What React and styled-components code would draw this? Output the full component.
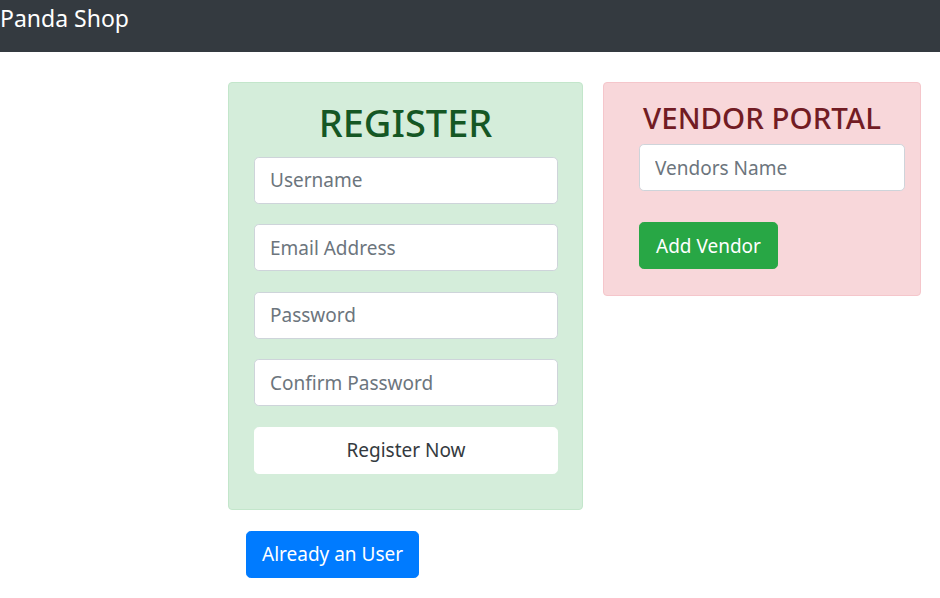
import styled, { createGlobalStyle } from "styled-components"

const Global = createGlobalStyle`
  * { box-sizing: border-box; }
  body {
    margin: 0;
    font-family: "Noto Sans", "Open Sans", sans-serif;
    background: #fff;
    color: #212529;
  }
`

const Navbar = styled.nav`
  height: 52px;
  background-color: #343a40;
  display: flex;
  align-items: flex-start;
`

const Brand = styled.span`
  color: #fff;
  font-size: 23px;
  line-height: 36px;
`

const Main = styled.div`
  display: flex;
  align-items: flex-start;
  gap: 20px;
  padding: 30px 0 0 228px;
`

const Column = styled.div`
  display: flex;
  flex-direction: column;
  align-items: flex-start;
`

const Card = styled.div`
  background-color: ${p => p.bg};
  border: 1px solid ${p => p.border};
  border-radius: 4px;
  width: ${p => p.width}px;
  padding: ${p => p.pad};
  display: flex;
  flex-direction: column;
`

const Heading = styled.h1`
  margin: 0 0 ${p => p.mb}px ${p => p.shift || 0}px;
  color: ${p => p.color};
  font-size: ${p => p.size}px;
  font-weight: 500;
  line-height: 1.2;
  text-align: center;
`

const Input = styled.input`
  width: ${p => p.width || 304}px;
  height: 47px;
  padding: 8px 15px;
  font-family: inherit;
  font-size: 19px;
  color: #495057;
  background: #fff;
  border: 1px solid #ced4da;
  border-radius: 4.8px;
  margin-bottom: ${p => p.mb || 20.5}px;
  &::placeholder { color: #6c757d; }
`

const Button = styled.button`
  height: 47px;
  padding: 0 16px;
  font-family: inherit;
  font-size: 19px;
  color: ${p => p.color || "#fff"};
  background-color: ${p => p.bg};
  border: 1px solid ${p => p.bg};
  border-radius: 4.8px;
  width: ${p => (p.full ? "304px" : "auto")};
  cursor: pointer;
`

const ButtonRow = styled.div`
  display: flex;
`

const BelowButton = styled(Button)`
  margin: 21px 0 0 18px;
  padding: 0 15px;
`

export default function App() {
  return (
    <>
      <Global />
      <Navbar>
        <Brand>Panda Shop</Brand>
      </Navbar>
      <Main>
        <Column>
          <Card bg="#d4edda" border="#c3e6cb" width={355} pad="17px 25px 35px 25px">
            <Heading color="#155724" size={38} mb={11}>REGISTER</Heading>
            <Input placeholder="Username" />
            <Input placeholder="Email Address" />
            <Input placeholder="Password" />
            <Input placeholder="Confirm Password" />
            <Button bg="#fff" color="#343a40" full>Register Now</Button>
          </Card>
          <BelowButton bg="#007bff">Already an User</BelowButton>
        </Column>
        <Card bg="#f8d7da" border="#f5c6cb" width={318} pad="17px 15px 26px 35px">
          <Heading color="#721c24" size={29.5} mb={9} shift={-20}>VENDOR PORTAL</Heading>
          <Input placeholder="Vendors Name" width={266} mb={31} />
          <ButtonRow>
            <Button bg="#28a745">Add Vendor</Button>
          </ButtonRow>
        </Card>
      </Main>
    </>
  )
}
